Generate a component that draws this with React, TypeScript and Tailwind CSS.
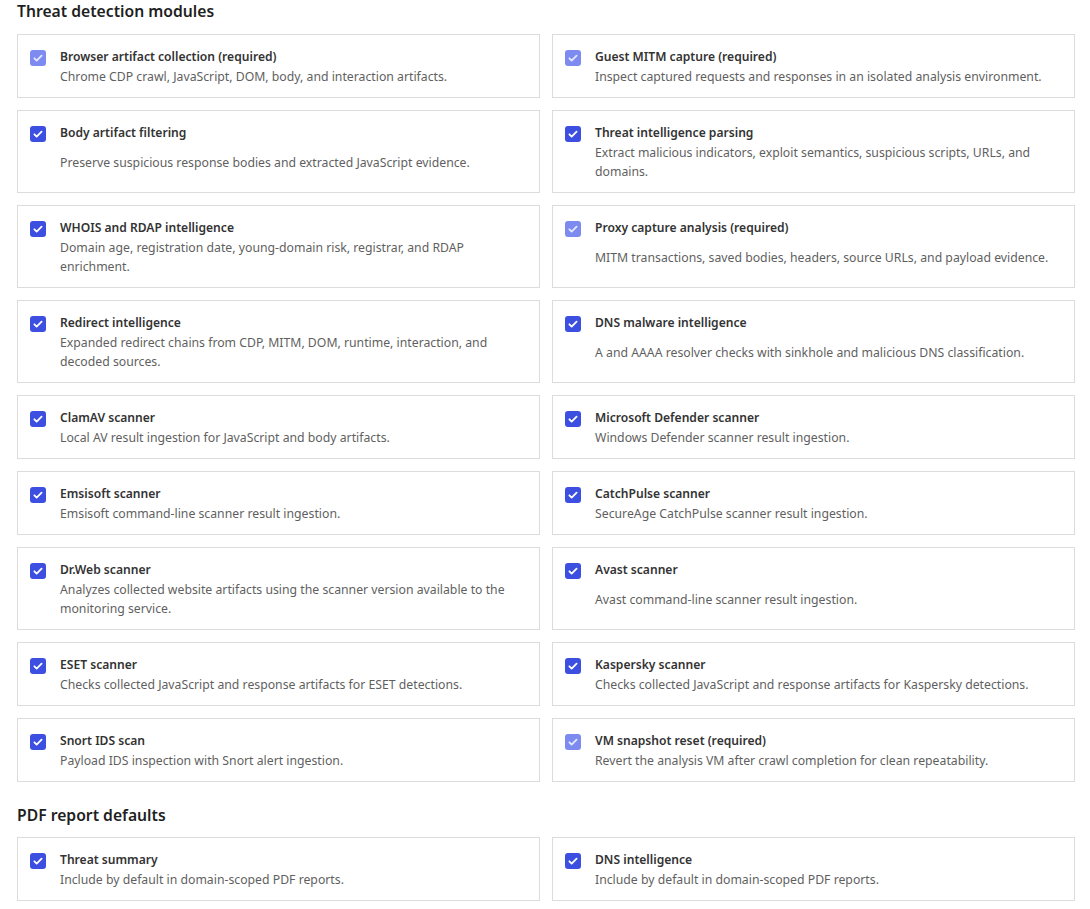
type Item = {
  title: string;
  desc: string[];
  required?: boolean;
};

const modules: Item[] = [
  { title: 'Browser artifact collection (required)', desc: ['Chrome CDP crawl, JavaScript, DOM, body, and interaction artifacts.'], required: true },
  { title: 'Guest MITM capture (required)', desc: ['Inspect captured requests and responses in an isolated analysis environment.'], required: true },
  { title: 'Body artifact filtering', desc: ['Preserve suspicious response bodies and extracted JavaScript evidence.'] },
  { title: 'Threat intelligence parsing', desc: ['Extract malicious indicators, exploit semantics, suspicious scripts, URLs, and', 'domains.'] },
  { title: 'WHOIS and RDAP intelligence', desc: ['Domain age, registration date, young-domain risk, registrar, and RDAP', 'enrichment.'] },
  { title: 'Proxy capture analysis (required)', desc: ['MITM transactions, saved bodies, headers, source URLs, and payload evidence.'], required: true },
  { title: 'Redirect intelligence', desc: ['Expanded redirect chains from CDP, MITM, DOM, runtime, interaction, and', 'decoded sources.'] },
  { title: 'DNS malware intelligence', desc: ['A and AAAA resolver checks with sinkhole and malicious DNS classification.'] },
  { title: 'ClamAV scanner', desc: ['Local AV result ingestion for JavaScript and body artifacts.'] },
  { title: 'Microsoft Defender scanner', desc: ['Windows Defender scanner result ingestion.'] },
  { title: 'Emsisoft scanner', desc: ['Emsisoft command-line scanner result ingestion.'] },
  { title: 'CatchPulse scanner', desc: ['SecureAge CatchPulse scanner result ingestion.'] },
  { title: 'Dr.Web scanner', desc: ['Analyzes collected website artifacts using the scanner version available to the', 'monitoring service.'] },
  { title: 'Avast scanner', desc: ['Avast command-line scanner result ingestion.'] },
  { title: 'ESET scanner', desc: ['Checks collected JavaScript and response artifacts for ESET detections.'] },
  { title: 'Kaspersky scanner', desc: ['Checks collected JavaScript and response artifacts for Kaspersky detections.'] },
  { title: 'Snort IDS scan', desc: ['Payload IDS inspection with Snort alert ingestion.'] },
  { title: 'VM snapshot reset (required)', desc: ['Revert the analysis VM after crawl completion for clean repeatability.'], required: true },
];

const pdfDefaults: Item[] = [
  { title: 'Threat summary', desc: ['Include by default in domain-scoped PDF reports.'] },
  { title: 'DNS intelligence', desc: ['Include by default in domain-scoped PDF reports.'] },
];

function Check({ disabled }: { disabled?: boolean }) {
  return (
    <span
      className={
        'mt-[3px] flex h-4 w-4 shrink-0 items-center justify-center self-start rounded-[3px] ' +
        (disabled ? 'bg-[#7d8bf1]' : 'bg-[#3c4fe0]')
      }
    >
      <svg viewBox="0 0 16 16" className="h-3 w-3" fill="none">
        <path
          d="M3.2 8.4l3 3L12.8 4.8"
          stroke={disabled ? '#e4e8ff' : '#ffffff'}
          strokeWidth="2.4"
          strokeLinecap="round"
          strokeLinejoin="round"
        />
      </svg>
    </span>
  );
}

function Card({ item }: { item: Item }) {
  return (
    <label className="flex gap-[14px] border border-[#dcdcdc] bg-white pl-[12px] pr-3 pt-3 pb-[11px]">
      <Check disabled={item.required} />
      <div className="grid gap-px">
        <div className="text-[12.1px] leading-[19px] font-semibold text-[#333]">{item.title}</div>
        <div className="whitespace-nowrap text-[12.25px] leading-[19px] text-[#5f5f5f]">
          {item.desc.map((line, i) => (
            <div key={i}>{line}</div>
          ))}
        </div>
      </div>
    </label>
  );
}

export default function App() {
  return (
    <div className="min-h-screen bg-white pl-[17px] pr-[15px] font-['Noto_Sans',sans-serif]">
      <h2 className="mt-[-2px] text-[15.7px] leading-[26px] font-semibold text-[#1f1f1f]">Threat detection modules</h2>
      <div className="mt-[10px] grid grid-cols-2 gap-3">
        {modules.map((m) => (
          <Card key={m.title} item={m} />
        ))}
      </div>
      <h2 className="mt-[20px] text-[15.7px] leading-[26px] font-semibold text-[#1f1f1f]">PDF report defaults</h2>
      <div className="mt-[9px] grid grid-cols-2 gap-3">
        {pdfDefaults.map((m) => (
          <Card key={m.title} item={m} />
        ))}
      </div>
    </div>
  );
}
